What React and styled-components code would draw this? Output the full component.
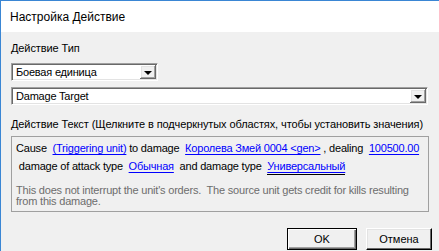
import React from 'react';
import styled, { createGlobalStyle } from 'styled-components';

const GlobalStyle = createGlobalStyle`
    html, body {
        margin: 0;
        padding: 0;
        background: #f0f0f0;
    }
    * {
        box-sizing: border-box;
    }
`;

const Window = styled.div`
    width: 439px;
    height: 251px;
    display: flex;
    flex-direction: column;
    border-left: 1px solid #3a86d4;
    border-top: 1px solid #3a86d4;
    font-family: "Liberation Sans", Arial, sans-serif;
    font-size: 11px;
    letter-spacing: -0.2px;
    color: #000;
    overflow: hidden;
`;

const TitleBar = styled.div`
    height: 31px;
    display: flex;
    align-items: center;
    padding-left: 9px;
    background: #fff;
    font-size: 12px;
    letter-spacing: 0;
`;

const Body = styled.div`
    flex: 1;
    display: flex;
    flex-direction: column;
    padding: 10px 10px 0 10px;
    background: #f0f0f0;
`;

const Label = styled.div`
    line-height: 13px;
    white-space: nowrap;
    letter-spacing: -0.1px;
    margin-top: ${p => p.$top || 0}px;
`;

const Combo = styled.div`
    display: flex;
    align-items: stretch;
    width: ${p => p.$width};
    height: 18px;
    margin-top: ${p => p.$top}px;
    background: #fff;
    border-top: 1px solid #a0a0a0;
    border-left: 1px solid #a0a0a0;
    border-right: 1px solid #fff;
    border-bottom: 1px solid #fff;
    box-shadow: inset 1px 1px #696969, inset -1px -1px #e3e3e3;
`;

const ComboText = styled.div`
    flex: 1;
    display: flex;
    align-items: center;
    padding-left: 4px;
    line-height: 13px;
`;

const ArrowButton = styled.div`
    width: 16px;
    margin: 1px 1px 1px 0;
    display: flex;
    align-items: center;
    justify-content: center;
    background: #f0f0f0;
    box-shadow: inset -1px -1px #696969, inset 1px 1px #fff, inset -2px -2px #a0a0a0, inset 2px 2px #e3e3e3;

    &::after {
        content: '';
        width: 0;
        height: 0;
        border-left: 4px solid transparent;
        border-right: 4px solid transparent;
        border-top: 4px solid #000;
        margin-top: 1px;
    }
`;

const TextBox = styled.div`
    margin-top: 5px;
    height: 76px;
    border: 1px solid #a0a0a0;
    padding: 2px 4px 0 4px;
`;

const Line = styled.div`
    line-height: 18px;
    white-space: pre;
`;

const Link = styled.span`
    color: #0000ff;
    text-decoration: underline;
    text-underline-offset: 2px;
    ${p => p.$focused && `
        border-bottom: 1px solid #000;
        padding-bottom: 2px;
    `}
`;

const Note = styled.div`
    margin-top: 10px;
    line-height: 11px;
    color: #6d6d6d;
`;

const Footer = styled.div`
    display: flex;
    justify-content: flex-end;
    gap: 9px;
    margin-top: 16px;
    margin-right: -3px;
`;

const Button = styled.button`
    width: ${p => p.$width}px;
    height: 22px;
    padding: 0;
    font-family: inherit;
    font-size: 11px;
    color: #000;
    background: #f0f0f0;
    border: 1px solid ${p => (p.$default ? '#000' : '#f0f0f0')};
    border-top-color: ${p => (p.$default ? '#000' : '#fff')};
    border-left-color: ${p => (p.$default ? '#000' : '#fff')};
    border-right-color: #000;
    border-bottom-color: #000;
    box-shadow: ${p => (p.$default
        ? 'inset 1px 1px #fff, inset -1px -1px #696969, inset -2px -2px #a0a0a0'
        : 'inset -1px -1px #696969, inset 1px 1px #e3e3e3')};
`;

export default function App() {
    return (
        <>
            <GlobalStyle />
            <Window>
                <TitleBar>Настройка Действие</TitleBar>
                <Body>
                    <Label>Действие Тип</Label>
                    <Combo $width="147px" $top={8}>
                        <ComboText>Боевая единица</ComboText>
                        <ArrowButton />
                    </Combo>
                    <Combo $width="417px" $top={6}>
                        <ComboText>Damage Target</ComboText>
                        <ArrowButton />
                    </Combo>
                    <Label $top={13}>Действие Текст (Щелкните в подчеркнутых областях, чтобы установить значения)</Label>
                    <TextBox>
                        <Line>
                            Cause  <Link>(Triggering unit)</Link> to damage  <Link>Королева Змей 0004 &lt;gen&gt;</Link> , dealing  <Link>100500.00</Link>
                        </Line>
                        <Line>
                            {' '}damage of attack type  <Link>Обычная</Link>  and damage type  <Link $focused>Универсальный</Link>
                        </Line>
                        <Note>
                            This does not interrupt the unit's orders.&nbsp; The source unit gets credit for kills resulting from this damage.
                        </Note>
                    </TextBox>
                    <Footer>
                        <Button $width={70} $default>OK</Button>
                        <Button $width={66}>Отмена</Button>
                    </Footer>
                </Body>
            </Window>
        </>
    );
}
